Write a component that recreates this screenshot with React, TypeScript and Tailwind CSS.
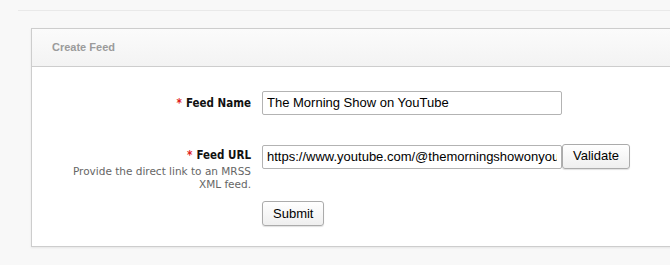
import React from 'react';

const labelFont = { fontFamily: '"DejaVu Sans Condensed", "DejaVu Sans", Verdana, sans-serif' };
const noteFont = { fontFamily: '"DejaVu Sans", Verdana, sans-serif' };

function Label({ text }: { text: string }) {
  return (
    <div className="text-right text-[11.5px] font-bold leading-[16px] text-[#111]" style={labelFont}>
      <span className="mr-[4px] text-[#e02020]">*</span>
      {text}
    </div>
  );
}

function Button({ children, className = '' }: { children: React.ReactNode; className?: string }) {
  return (
    <button
      className={`h-[25px] rounded-[3px] border border-[#ababab] bg-gradient-to-b from-white to-[#efefef] px-[10px] text-[13px] text-black shadow-[0_1px_1px_rgba(0,0,0,0.12)] ${className}`}
    >
      {children}
    </button>
  );
}

export default function App() {
  return (
    <div className="h-screen overflow-hidden bg-[#f8f8f8] font-['Liberation_Sans',Arial,sans-serif]">
      {/* top rule */}
      <div className="pl-[18px] pt-[10px]">
        <div className="h-px bg-[#e9e9e9]" />
      </div>

      {/* panel */}
      <div className="ml-[31px] mt-[17px] w-[700px] border border-[#cdcdcd] bg-white shadow-[0_1px_2px_rgba(0,0,0,0.08)]">
        <div className="flex h-[38px] items-center border-b border-[#cdcdcd] bg-gradient-to-b from-[#fbfbfb] to-[#f3f3f3] pl-[20px]">
          <span className="text-[11px] font-bold text-[#9b9b9b]">Create Feed</span>
        </div>

        <div className="pb-[20px] pt-[23px]">
          <div className="grid grid-cols-[219px_1fr] gap-x-[11px]">
            {/* Feed Name */}
            <div className="flex items-center pt-[1px]">
              <div className="w-full">
                <Label text="Feed Name" />
              </div>
            </div>
            <div>
              <input
                defaultValue="The Morning Show on YouTube"
                className="h-[24px] w-[300px] rounded-[2px] border border-[#b3b3b3] px-[4px] text-[13px] text-black outline-none"
              />
            </div>

            {/* Feed URL */}
            <div className="mt-[30px] pt-[2px]">
              <Label text="Feed URL" />
              <div className="mt-[2px] text-right text-[10.5px] leading-[13px] text-[#666]" style={noteFont}>
                Provide the direct link to an MRSS
                <br />
                XML feed.
              </div>
            </div>
            <div className="mt-[30px] flex items-start">
              <input
                defaultValue="https://www.youtube.com/@themorningshowonyoutube"
                className="h-[24px] w-[300px] rounded-[2px] border border-[#b3b3b3] px-[4px] text-[13px] text-black outline-none"
              />
              <Button className="-mt-[1px] w-[68px] px-0">Validate</Button>
            </div>

            {/* Submit */}
            <div />
            <div className="mt-[10px]">
              <Button className="w-[62px] px-0">Submit</Button>
            </div>
          </div>
        </div>
      </div>
    </div>
  );
}
